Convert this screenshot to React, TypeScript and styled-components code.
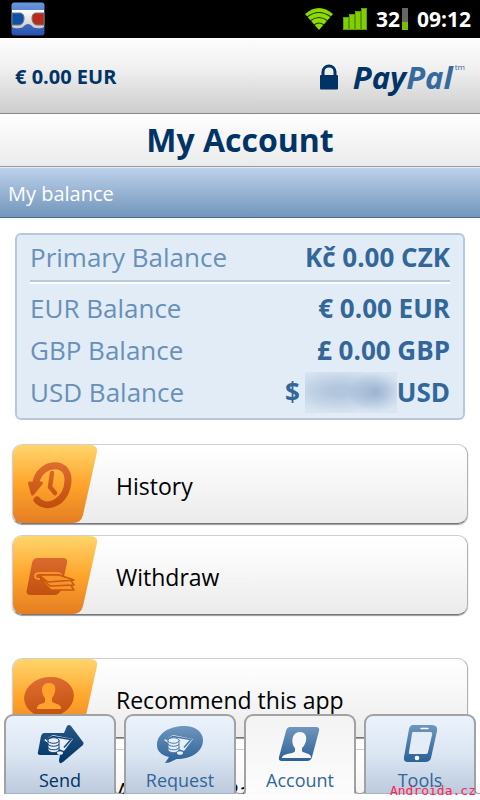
import React from "react";
import styled, { createGlobalStyle } from "styled-components";

const navy = "#003366";
const blue = "#336699";

const GlobalStyle = createGlobalStyle`
  *, *::before, *::after { box-sizing: border-box; }
  body { margin: 0; background: #fff; font-family: "Open Sans", "Noto Sans", sans-serif; }
  h1, h2, dl, dd, dt { margin: 0; font: inherit; }
  button { font: inherit; cursor: pointer; }
  svg { display: block; flex: none; }
`;

const Screen = styled.div`
  position: relative;
  display: flex;
  flex-direction: column;
  height: 100vh;
  overflow: hidden;
  background: #fff;
`;

const StatusBar = styled.div`
  display: flex;
  flex: none;
  align-items: center;
  height: 38px;
  padding: 0 9px 0 11px;
  background: #000;
  color: #fff;
  font-size: 21px;
  font-weight: 700;
`;

const StatusIcons = styled.div`
  display: flex;
  align-items: center;
  gap: 9px;
  margin-left: auto;
`;

const BatteryLevel = styled.div`
  display: flex;
  align-items: center;
  gap: 2px;
`;

const Header = styled.header`
  display: flex;
  flex: none;
  align-items: center;
  justify-content: space-between;
  height: 76px;
  padding: 2px 15px 0;
  border-bottom: 1px solid #888;
  background: linear-gradient(#fdfdfd, #f0f0f0 40%, #cdcdcd);
  color: ${navy};
`;

const HeaderBalance = styled.strong`
  font-size: 20px;
`;

const Brand = styled.div`
  display: flex;
  align-items: center;
  gap: 14px;
`;

const Wordmark = styled.span<{ $tone?: string }>`
  color: ${(p) => p.$tone ?? navy};
  font-size: 31px;
  font-style: italic;
  font-weight: 700;
  line-height: 40px;
`;

const Logo = styled.div`
  display: flex;
  align-items: flex-start;
`;

const Trademark = styled.span`
  margin-left: 2px;
  color: ${blue};
  font-size: 8px;
  line-height: 20px;
`;

const Title = styled.h1`
  flex: none;
  height: 53px;
  border-bottom: 1px solid #999;
  background: linear-gradient(#fff, #ebebeb);
  color: ${navy};
  font-size: 32px;
  font-weight: 700;
  line-height: 51px;
  text-align: center;
`;

const SectionBar = styled.h2`
  flex: none;
  height: 51px;
  padding-left: 8px;
  border-top: 1px solid #e2ebf6;
  border-bottom: 1px solid #4d6c8c;
  background: linear-gradient(#bcd0ea, #7296bb);
  color: #fff;
  font-size: 20px;
  line-height: 51px;
`;

const Content = styled.main`
  flex: 1;
  min-height: 0;
  overflow: hidden;
  margin-bottom: 6px;
  padding: 15px 12px 0;
`;

const Balances = styled.dl`
  margin: 0 3px 24px;
  padding: 0 13px 5px;
  border: 2px solid #b6c9dc;
  border-radius: 6px;
  background: #e1ecf7;
  font-size: 26px;
`;

const BalanceRow = styled.div<{ $primary?: boolean }>`
  display: flex;
  justify-content: space-between;
  height: ${(p) => (p.$primary ? 47 : 42)}px;
  margin-bottom: ${(p) => (p.$primary ? 5 : 0)}px;
  border-bottom: ${(p) => (p.$primary ? "2px solid #b6c9dc" : "none")};
  box-shadow: ${(p) => (p.$primary ? "0 2px #fff" : "none")};
  line-height: ${(p) => (p.$primary ? 45 : 42)}px;
`;

const BalanceName = styled.dt`
  color: #6890b8;
`;

const BalanceAmount = styled.dd`
  display: flex;
  color: ${blue};
  font-weight: 700;
`;

const Redacted = styled.span`
  width: 92px;
  height: 41px;
  margin: 1px 0 0 5px;
  background:
    radial-gradient(ellipse 28px 20px at 70px 20px, #9bb4d2, transparent),
    radial-gradient(ellipse 54px 22px at 34px 19px, #b2c6de 20%, transparent),
    #d8e4f1;
`;

const ActionList = styled.div<{ $spaced?: boolean }>`
  display: grid;
  gap: 11px;
  margin-top: ${(p) => (p.$spaced ? 43 : 0)}px;
`;

const Action = styled.button`
  display: flex;
  align-items: center;
  gap: 18px;
  width: 100%;
  height: 80px;
  padding: 0;
  overflow: hidden;
  border: 1px solid #d0d0d0;
  border-right-color: #b0b0b0;
  border-bottom-color: #777;
  border-radius: 10px;
  background: linear-gradient(#fff, #fafafa 30%, #ebebeb);
  box-shadow: 0 1px 1px #999;
  color: #000;
  font-size: 23px;
  text-align: left;
`;

const ActionLabel = styled.span`
  padding-top: 4px;
`;

const BottomArea = styled.div`
  position: absolute;
  right: 0;
  bottom: 0;
  left: 0;
`;

const TabBar = styled.nav`
  display: grid;
  grid-template-columns: repeat(4, 1fr);
  gap: 8px;
  padding: 0 4px;
`;

const Footer = styled.footer`
  display: flex;
  align-items: flex-end;
  justify-content: flex-end;
  height: 6px;
  padding: 0 4px;
  background: #fdfdfd;
`;

const Tab = styled.button<{ $active?: boolean; $dark?: boolean }>`
  position: relative;
  display: flex;
  flex-direction: column;
  align-items: center;
  height: 80px;
  padding: 8px 0 0;
  border: 2px solid #a2a2a2;
  border-bottom: 1px solid ${(p) => (p.$active ? "#f9f9f9" : "#a9b4c2")};
  border-radius: 9px 9px 0 0;
  background: ${(p) =>
    p.$active ? "linear-gradient(#f3f3f3, #fcfcfc)" : "linear-gradient(#ebf2fb, #dbe6f3 50%, #bccade)"};
  color: ${(p) => (p.$dark ? navy : blue)};
  font-size: 18px;
  line-height: 24px;
  &::after {
    content: "";
    position: absolute;
    right: -11px;
    bottom: -1px;
    width: 10px;
    height: 7px;
    border: solid #999;
    border-width: 0 1px 1px;
    border-radius: 0 0 4px 4px;
  }
`;

const TabLabel = styled.span`
  margin-top: 4px;
`;

const Credit = styled.span`
  position: relative;
  color: #ff2452;
  font-family: "DejaVu Sans Mono", monospace;
  font-size: 13px;
  line-height: 18px;
`;

const GogglesIcon = () => (
  <svg width="34" height="34" viewBox="0 0 34 34">
    <defs>
      <linearGradient id="gog" x2="0" y2="1"><stop stopColor="#6a96dc" /><stop offset="1" stopColor="#2851ae" /></linearGradient>
      <linearGradient id="strap" x2="0" y2="1"><stop stopColor="#fff" /><stop offset="1" stopColor="#c9c9c9" /></linearGradient>
    </defs>
    <rect x="0.5" y="0.5" width="33" height="33" rx="3" fill="url(#gog)" />
    <path d="M1 8h32v17q-3 2-8 1c-4 0-4-4-8-4s-4 4-8 4q-5 1-8-1z" fill="url(#strap)" />
    <path d="M1 11h8c6 0 5 12-1 12H1z" fill="#0e50a8" stroke="#777" />
    <path d="M33 11h-8c-6 0-5 12 1 12h7z" fill="#b62b1c" stroke="#777" />
  </svg>
);

const WifiIcon = () => (
  <svg width="30" height="24" viewBox="0 0 30 24">
    <path d="M1 7Q15-5 29 7L15 23z" fill="#8edb00" />
    <path d="M3 10q12-9 24 0M6 14q9-7 18 0M10 18q5-4 10 0" fill="none" stroke="#1c3600" strokeWidth="1.2" />
  </svg>
);

const SignalIcon = () => (
  <svg width="24" height="23" viewBox="0 0 24 23">
    <path d="M0 9h6v13H0zM6 6h6v16H6zM12 3h6v19h-6zM18 0h6v22h-6z" fill="#82ce00" />
    <path d="M.5 9.500h5v12h-5zM6.500 6.500h5v15h-5zM12.500 3.500h5v18h-5zM18.500.5h5v21h-5z" fill="none" stroke="#5c9e08" />
  </svg>
);

const BatteryIcon = () => (
  <svg width="6" height="22" viewBox="0 0 6 22">
    <path d="M0 0h6v22H0z" fill="#666" />
    <path d="M0 14h6v8H0z" fill="#78bd08" />
  </svg>
);

const LockIcon = () => (
  <svg width="20" height="26" viewBox="0 0 20 26">
    <path d="M4 12V8c0-8 12-8 12 0v4" fill="none" stroke={navy} strokeWidth="3" />
    <rect x="1" y="11" width="18" height="14.500" rx="1" fill={navy} />
  </svg>
);

/* Slanted orange panel at the start of each action, with its pictogram on top. */
const ActionArt = ({ kind }: { kind: "history" | "withdraw" | "recommend" | "about" }) => (
  <svg width="85" height="78" viewBox="0 0 85 78" aria-hidden="true">
    <defs>
      <linearGradient id={`panel-${kind}`} x2="0" y2="1">
        <stop stopColor="#ffd56b" /><stop offset=".5" stopColor="#ffa52c" /><stop offset="1" stopColor="#e57d22" />
      </linearGradient>
      <linearGradient id={`ink-${kind}`} gradientUnits="userSpaceOnUse" x1="0" y1="18" x2="0" y2="64">
        <stop stopColor="#de6e30" /><stop offset="1" stopColor="#be4c0a" />
      </linearGradient>
    </defs>
    <path d="M0 0H77q8 0 7 7L70 70q-2 8-10 8H0z" fill={`url(#panel-${kind})`} />
    {kind === "history" && (
      <g fill="none" stroke={`url(#ink-${kind})`} strokeLinecap="round" strokeLinejoin="round">
        <path d="M23 37C27 17 56 14 55 36C54 57 34 66 24 55" strokeWidth="7" />
        <path d="M16.500 38h12l-9 11z" fill={`url(#ink-${kind})`} strokeWidth="3" />
        <path d="M39 28l-2 14 5 6" strokeWidth="4.500" />
      </g>
    )}
    {kind === "withdraw" && (
      <g>
        <path d="M25 22H50q5 0 4 5l-6 27q-2 5-7 5H18q-6 0-4-6l5-26q1-5 6-5z" fill={`url(#ink-${kind})`} />
        <path d="M27 43q-5 0-5-3t5-3h16q5 0 5 2" fill="none" stroke="#f6942b" strokeWidth="2" />
        <g fill="#f6942b" stroke="#c8580f" strokeWidth="1.500" strokeLinejoin="round">
          <path d="M28 44l10 10h23l-4-6z" /><path d="M27 41l10 9 24-1-4-6z" /><path d="M26 39l9 7 26-2-15-5z" />
        </g>
      </g>
    )}
    {(kind === "recommend" || kind === "about") && (
      <g>
        <ellipse cx="36" cy="38" rx="25" ry="20" transform="rotate(-8 36 38)" fill={`url(#ink-${kind})`} />
        <path d="M36 24c9 0 7 10 3 15v3c0 3 10 2 9 8H24c-1-6 9-5 8-8v-3c-4-5-5-15 4-15z" fill="#ffa22d" />
      </g>
    )}
  </svg>
);

const Ink = ({ id, dark }: { id: string; dark?: boolean }) => (
  <linearGradient id={id} x2="0" y2="1">
    <stop stopColor={dark ? "#285786" : "#7096bd"} />
    <stop offset="1" stopColor={dark ? navy : "#2a6197"} />
  </linearGradient>
);

/* Banknotes behind a stack of coins, with one loose coin below. */
const Money = ({ ink }: { ink: string }) => (
  <g fill="#e7eff8" stroke={ink} strokeWidth="1">
    <path d="M8 16l9-5 20 4-9 12q-4-2-8-2z" stroke="none" />
    <path d="M10 15.500l7-3 18 3-7 8" fill="none" strokeWidth="1.500" />
    <path d="M12 16v10c1 3.500 10 3.500 11 0V16z" />
    <ellipse cx="17.500" cy="16.500" rx="5.500" ry="2.800" />
    <path d="M12 20c1 3 10 3 11 0M12 23.500c1 3 10 3 11 0" fill="none" />
    <ellipse cx="24" cy="29" rx="3" ry="1.800" stroke="none" />
  </g>
);

const SendIcon = () => (
  <svg width="48" height="40" viewBox="0 0 48 40">
    <defs><Ink id="send" dark /></defs>
    <path d="M8 9h20l3-7q2-2 4 0l12 16q1 1 0 3L27 38q-4 3-4-2l1-5H4q-3 0-2-3L5 12q1-3 3-3z" fill="url(#send)" />
    <Money ink="#104070" />
  </svg>
);

const RequestIcon = () => (
  <svg width="48" height="40" viewBox="0 0 48 40">
    <defs><Ink id="request" /></defs>
    <path d="M26 2c12-1 21 5 21 14 0 12-12 19-26 19-2 0-6 4-12 4l4-6C5 31 1 27 1 21 1 10 12 3 26 2z" fill="url(#request)" />
    <Money ink="#4878a8" />
  </svg>
);

const AccountIcon = () => (
  <svg width="48" height="40" viewBox="0 0 48 40">
    <defs><Ink id="account" /></defs>
    <path d="M14 3h26q4 0 3 4l-7 26q-1 4-5 4H6q-4 0-3-4L10 7q1-4 4-4z" fill="url(#account)" />
    <path d="M24 8c9 0 7 12 2 16v3c0 2 10 2 9 7H6c0-5 13-4 13-7v-3c-4-4-4-16 5-16z" fill="#f7f7f7" />
  </svg>
);

const ToolsIcon = () => (
  <svg width="48" height="40" viewBox="0 0 48 40">
    <defs><Ink id="tools" /></defs>
    <path d="M17 1h19q6 0 5 6l-6 27q-1 4-6 4H12q-5 0-4-5l5-28q1-4 4-4z" fill="url(#tools)" />
    <path d="M17 8h17q3 0 2 3l-4 17q0 2-2 2H15q-3 0-2-2l3-18q0-2 1-2z" fill="#e4edf7" />
    <path d="M25 4.500h7" stroke="#fff" strokeWidth="1.500" strokeLinecap="round" />
    <circle cx="21" cy="34" r="2.300" fill="#fff" />
  </svg>
);

export default function App() {
  return (
    <>
      <GlobalStyle />
      <Screen>
        <StatusBar>
          <GogglesIcon />
          <StatusIcons>
            <WifiIcon />
            <SignalIcon />
            <BatteryLevel>32 <BatteryIcon /></BatteryLevel>
            <time>09:12</time>
          </StatusIcons>
        </StatusBar>
        <Header>
          <HeaderBalance>€ 0.00 EUR</HeaderBalance>
          <Brand>
            <LockIcon />
            <Logo>
              <Wordmark>Pay</Wordmark>
              <Wordmark $tone="#36699d">Pal</Wordmark>
              <Trademark>tm</Trademark>
            </Logo>
          </Brand>
        </Header>
        <Title>My Account</Title>
        <SectionBar>My balance</SectionBar>
        <Content>
          <Balances>
            <BalanceRow $primary>
              <BalanceName>Primary Balance</BalanceName>
              <BalanceAmount>Kč 0.00 CZK</BalanceAmount>
            </BalanceRow>
            <BalanceRow>
              <BalanceName>EUR Balance</BalanceName>
              <BalanceAmount>€ 0.00 EUR</BalanceAmount>
            </BalanceRow>
            <BalanceRow>
              <BalanceName>GBP Balance</BalanceName>
              <BalanceAmount>£ 0.00 GBP</BalanceAmount>
            </BalanceRow>
            <BalanceRow>
              <BalanceName>USD Balance</BalanceName>
              <BalanceAmount>$<Redacted />USD</BalanceAmount>
            </BalanceRow>
          </Balances>
          <ActionList>
            <Action><ActionArt kind="history" /><ActionLabel>History</ActionLabel></Action>
            <Action><ActionArt kind="withdraw" /><ActionLabel>Withdraw</ActionLabel></Action>
          </ActionList>
          <ActionList $spaced>
            <Action><ActionArt kind="recommend" /><ActionLabel>Recommend this app</ActionLabel></Action>
            <Action><ActionArt kind="about" /><ActionLabel>About PayPal</ActionLabel></Action>
          </ActionList>
        </Content>
        <BottomArea>
          <TabBar>
            <Tab $dark><SendIcon /><TabLabel>Send</TabLabel></Tab>
            <Tab><RequestIcon /><TabLabel>Request</TabLabel></Tab>
            <Tab $active><AccountIcon /><TabLabel>Account</TabLabel></Tab>
            <Tab><ToolsIcon /><TabLabel>Tools</TabLabel></Tab>
          </TabBar>
          <Footer><Credit>Androida.cz</Credit></Footer>
        </BottomArea>
      </Screen>
    </>
  );
}
